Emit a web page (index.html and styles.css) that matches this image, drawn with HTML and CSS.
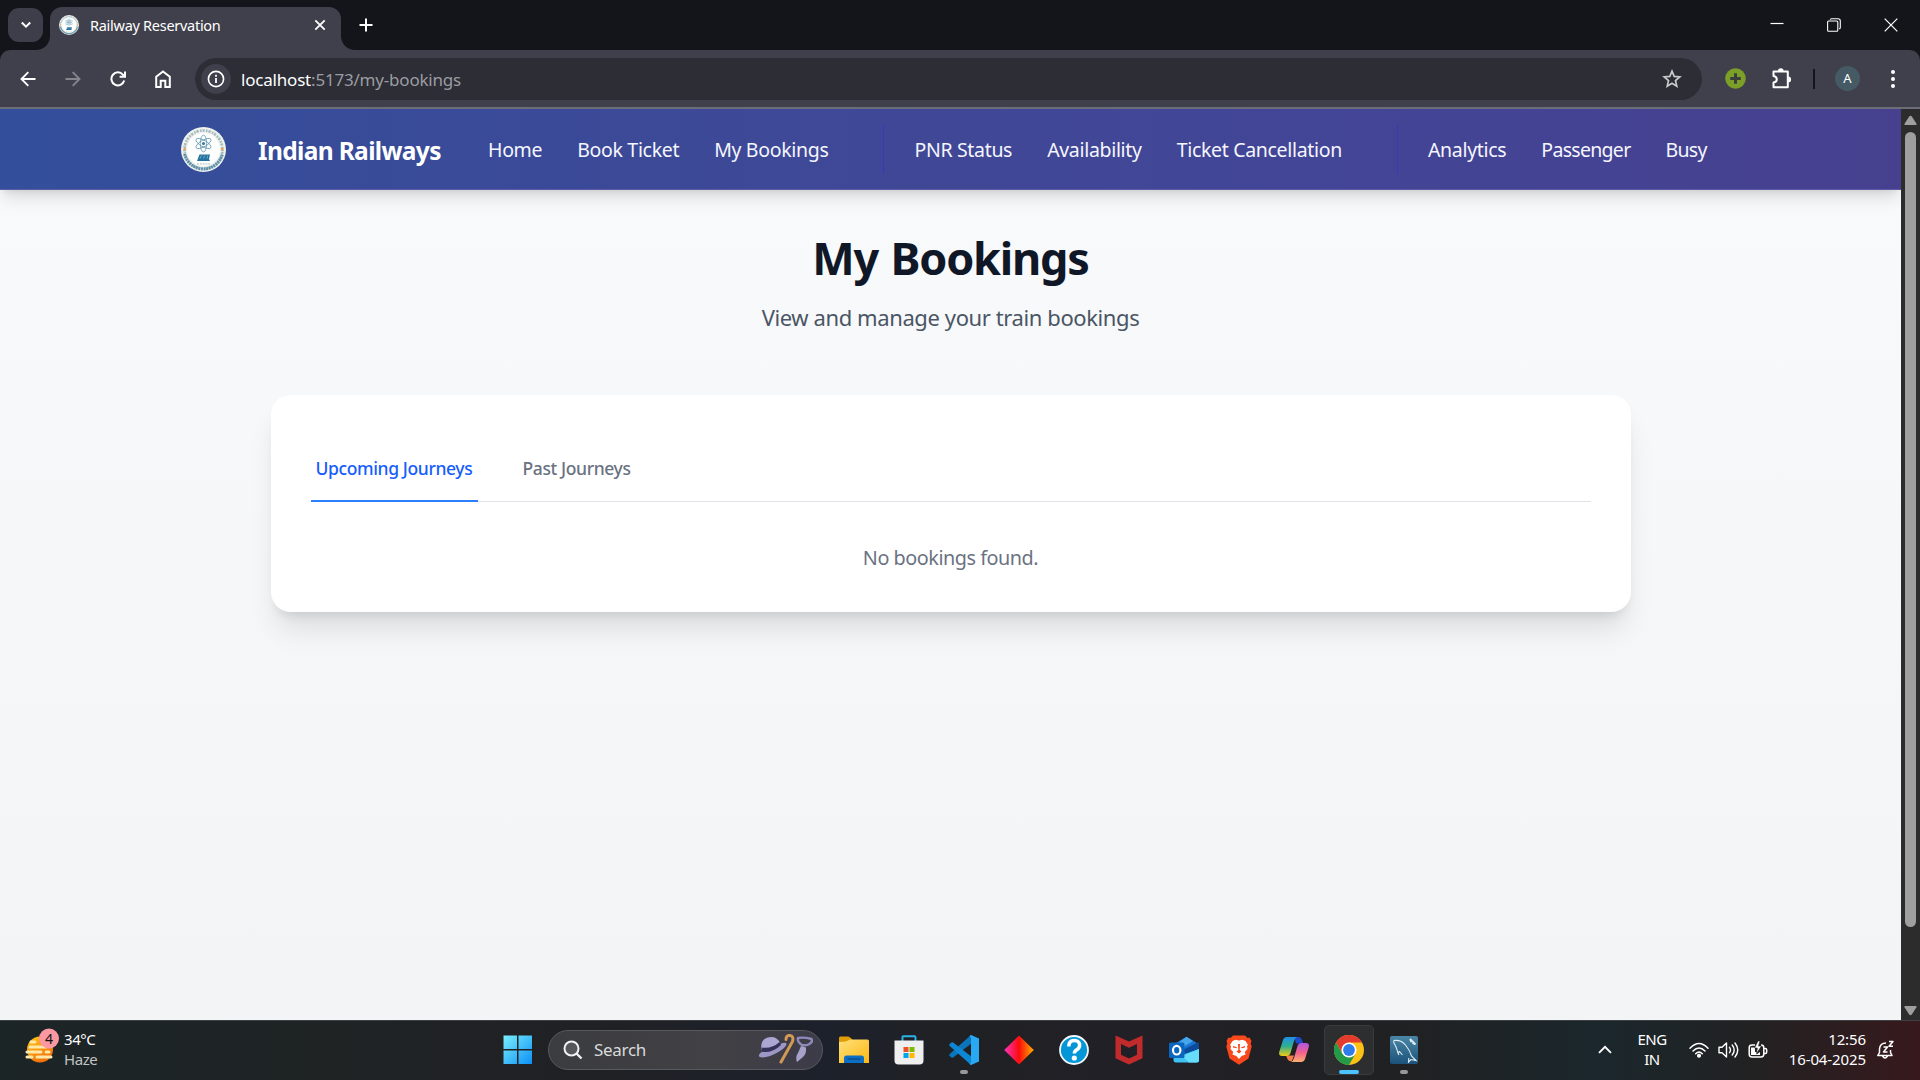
FILE: index.html
```html
<!DOCTYPE html>
<html lang="en">
<head>
<meta charset="utf-8">
<title>Railway Reservation</title>
<link rel="stylesheet" href="styles.css">
</head>
<body>
<svg class="defs" width="0" height="0" aria-hidden="true">
  <symbol id="emblem" viewBox="0 0 45 45">
    <circle cx="22.5" cy="22.5" r="22.5" fill="#eef1ec"/>
    <circle cx="22.5" cy="22.5" r="19" fill="none" stroke="#a3bac3" stroke-width="2.6" stroke-dasharray="1.6 .9 2.3 1.3"/>
    <path d="M3.6 27a19.4 19.4 0 0 0 37.8 0" fill="none" stroke="#5d90a9" stroke-width="3" stroke-dasharray="1.9 .7"/>
    <circle cx="22.5" cy="22.5" r="16.4" fill="#fff"/>
    <circle cx="3.8" cy="22" r="1.3" fill="#f0a04c"/><circle cx="41.2" cy="22" r="1.3" fill="#f0a04c"/>
    <g fill="none" stroke="#5f98b2" stroke-width=".8">
      <ellipse cx="22.5" cy="16.5" rx="3.2" ry="8.5"/>
      <ellipse cx="22.5" cy="16.5" rx="3.2" ry="8.5" transform="rotate(60 22.5 16.5)"/>
      <ellipse cx="22.5" cy="16.5" rx="3.2" ry="8.5" transform="rotate(-60 22.5 16.5)"/>
    </g>
    <circle cx="22.5" cy="16.5" r="1.6" fill="#3f7d9c"/>
    <path d="M18.500 27.5h10.500l-1 4.500 1 2H16z" fill="#23749f"/>
    <path d="M19 31.500l1.500-3M22.500 31.500l1.200-3M26 31.500l.8-3" stroke="#8cc0d8" stroke-width=".7"/>
    <path d="M16 36.8h13" stroke="#bccbd1" stroke-width="1.200" stroke-dasharray="2 .8"/>
  </symbol>
</svg>

<div class="titlebar">
  <button class="tab-search" aria-label="Search tabs">
    <svg width="12" height="8" viewBox="0 0 12 8"><path d="M1.8 1.5 6 5.7l4.2-4.2" fill="none" stroke="#fff" stroke-width="2"/></svg>
  </button>
  <div class="browser-tab">
    <svg class="favicon" width="20" height="20"><use href="#emblem"/></svg>
    <span class="browser-tab-title">Railway Reservation</span>
    <svg width="12" height="12" viewBox="0 0 12 12"><path d="m1.3 1.3 9.4 9.4m0-9.4-9.4 9.4" stroke="#fff" stroke-width="1.8"/></svg>
  </div>
  <svg class="new-tab" width="14" height="14" viewBox="0 0 14 14"><path d="M7 .5v13M.5 7h13" stroke="#fff" stroke-width="2"/></svg>
  <div class="window-controls">
    <svg width="14" height="14" viewBox="0 0 14 14"><path d="M.5 5.500h13" stroke="#fff" stroke-width="1.2"/></svg>
    <svg width="14" height="14" viewBox="0 0 14 14" fill="none" stroke="#fff" stroke-width="1.1"><rect x=".6" y="3" width="10.2" height="10.2" rx="1"/><path d="M3.2 1.8Q3.2.7 4.6.7h6.4q2.3 0 2.3 2.3v6.4q0 1.3-1.2 1.3"/></svg>
    <svg width="14" height="14" viewBox="0 0 14 14"><path d="m.7.7 12.6 12.6m0-12.6L.7 13.3" stroke="#fff" stroke-width="1.2"/></svg>
  </div>
</div>

<div class="toolbar-back">
<div class="toolbar">
  <div class="nav-buttons">
    <svg width="16" height="16" viewBox="0 0 16 16" fill="none" stroke="#fff" stroke-width="1.9"><path d="M15.5 8H2M8.3 1.2 1.5 8l6.8 6.8"/></svg>
    <svg width="16" height="16" viewBox="0 0 16 16" fill="none" stroke="#85868d" stroke-width="1.9"><path d="M.5 8H14M7.7 1.2 14.5 8l-6.8 6.8"/></svg>
    <svg width="16" height="16" viewBox="0 0 16 16" fill="none" stroke="#fff" stroke-width="2"><path d="M14.2 9.6A6.5 6.5 0 1 1 13 3.8l1.8 1.8"/><path d="M15 .4v5.4H9.6"/></svg>
    <svg width="16" height="18" viewBox="0 0 16 18" fill="none" stroke="#fff" stroke-width="2"><path d="M1.2 6.7 8 1.4l6.8 5.3V17h-4.5v-6.3H5.7V17H1.2z"/></svg>
  </div>
  <div class="omnibox">
    <span class="site-info"><svg width="18" height="18" viewBox="0 0 18 18"><circle cx="9" cy="9" r="7.6" fill="none" stroke="#fff" stroke-width="1.6"/><path d="M9 8v5M9 4.8v2" stroke="#fff" stroke-width="1.8"/></svg></span>
    <span class="url"><b>localhost</b>:5173/my-bookings</span>
    <svg class="star" width="20" height="20" viewBox="0 0 20 20"><path d="m10 2.2 2.2 5.2 5.6.5-4.3 3.7 1.3 5.6-4.8-3-4.8 3 1.3-5.6L2.2 7.900l5.600-.5z" fill="none" stroke="#c8c9cc" stroke-width="1.7"/></svg>
  </div>
  <svg class="ext-add" width="21" height="21" viewBox="0 0 21 21"><circle cx="10.5" cy="10.5" r="10.300" fill="#7c9f27"/><path d="M10.500 5.200v10.600M5.200 10.500h10.600" stroke="#3a3f3c" stroke-width="3"/></svg>
  <svg class="ext-puzzle" width="22" height="22" viewBox="0 0 22 22"><path d="M2.500 3.500h14.300v15.700H2.500v-4.700q3.300-.4 3.300-3.200T2.500 8z" fill="none" stroke="#fff" stroke-width="2" stroke-linejoin="round"/><path d="M7 3a2.800 2.800 0 0 1 5.600 0zM17.200 8.500a2.900 2.900 0 0 1 0 5.800z" fill="#fff"/></svg>
  <span class="toolbar-rule"></span>
  <span class="avatar">A</span>
  <svg class="kebab" width="6" height="20" viewBox="0 0 6 20" fill="#fff"><circle cx="3" cy="3" r="2"/><circle cx="3" cy="10" r="2"/><circle cx="3" cy="17" r="2"/></svg>
</div>
</div>

<div class="viewport">
  <div class="page">
    <header class="site-header">
      <svg class="logo" width="45" height="45"><use href="#emblem"/></svg>
      <span class="brand">Indian Railways</span>
      <nav class="site-nav">
        <div class="nav-group">
          <a>Home</a><a>Book Ticket</a><a>My Bookings</a>
        </div>
        <div class="nav-group divided">
          <a>PNR Status</a><a>Availability</a><a>Ticket Cancellation</a>
        </div>
        <div class="nav-group divided">
          <a>Analytics</a><a class="tight">Passenger</a><a class="tight">Busy</a>
        </div>
      </nav>
    </header>
    <main class="content">
      <h1>My Bookings</h1>
      <p class="subtitle">View and manage your train bookings</p>
      <section class="card">
        <div class="tabs">
          <a class="tab active">Upcoming Journeys</a>
          <a class="tab">Past Journeys</a>
        </div>
        <p class="empty">No bookings found.</p>
      </section>
    </main>
  </div>
  <div class="scrollbar">
    <svg width="13" height="11" viewBox="0 0 13 11"><path d="M5.200 1.500q1.300-1.600 2.600 0l4.700 7.300q.4 1.200-.8 1.200H1.300Q.1 10 .5 8.800z" fill="#9f9f9f"/></svg>
    <div class="thumb"></div>
    <svg width="13" height="11" viewBox="0 0 13 11"><path d="M5.200 9.500q1.300 1.600 2.600 0l4.700-7.300Q12.900 1 11.700 1H1.300Q.1 1 .5 2.200z" fill="#9f9f9f"/></svg>
  </div>
</div>

<footer class="taskbar">
  <div class="weather">
    <svg width="36" height="36" viewBox="0 0 36 36">
      <defs><linearGradient id="sun" x1="0" y1="0" x2=".5" y2="1"><stop offset="0" stop-color="#ffc814"/><stop offset="1" stop-color="#f3700c"/></linearGradient></defs>
      <circle cx="16" cy="21.500" r="13" fill="url(#sun)"/>
      <g stroke="#ffe9a8" stroke-width="3" stroke-linecap="round"><path d="M7 14h4M6 19h16M3 24h14M22 24h3M3 29h5M13 29h14"/></g>
      <circle cx="25" cy="10.500" r="10" fill="#fb98a2"/>
      <text x="25" y="15.500" text-anchor="middle" class="badge-text">4</text>
    </svg>
    <div class="weather-text"><span>34°C</span><span class="dim">Haze</span></div>
  </div>

  <div class="apps">
    <svg class="start" width="30" height="30" viewBox="0 0 30 30">
      <defs><linearGradient id="win" x1="0" y1="0" x2="1" y2="1"><stop offset="0" stop-color="#7af0fc"/><stop offset="1" stop-color="#0c8ff6"/></linearGradient></defs>
      <path d="M.500.500H14V14H.500zM15.500.500H29V14H15.500zM.500 15.500H14V29H.500zM15.500 15.500H29V29H15.500z" fill="url(#win)"/>
    </svg>
    <div class="search">
      <svg width="20" height="20" viewBox="0 0 20 20"><circle cx="8.500" cy="8.500" r="7" fill="#55565a" stroke="#f1f1f1" stroke-width="2"/><path d="m13.500 13.500 5 5" stroke="#f1f1f1" stroke-width="2.400"/></svg>
      <span>Search</span>
      <svg class="search-art" width="56" height="32" viewBox="0 0 56 32">
        <path d="M1 22.500q-1-3.500 6-6L22 10q7-2.500 6.500.500-1 3.500-9 8-13 7-18.500 4z" fill="#9d97c6"/>
        <path d="M3.500 15Q2 6 9.500 3.500 18 1 22 8.500 16 16 4.500 17z" fill="#aca6d2"/>
        <path d="M3.500 13.500Q14 15 21.500 8l1.500 3Q15 19 4.500 18z" fill="#35325a"/>
        <path d="M23 28 34.500 7.500Q36 2 32 1.500t-4 4" fill="none" stroke="#d29a55" stroke-width="3" stroke-linecap="round"/>
        <path d="M40 4q6-1 13.500 1 1.500 3.500-3 5.500-3 1.300-6.500.5-5-3-4-7z" fill="none" stroke="#8e89b8" stroke-width="2.400"/>
        <path d="m43 12 5 1.500q.5 7-3 9.500l-6 5q-2-5 1-9z" fill="#a7a1cc"/>
      </svg>
    </div>

    <div class="app">
      <svg width="30" height="28" viewBox="0 0 30 28"><defs><linearGradient id="fold" x1="0" y1="0" x2="1" y2="1"><stop offset="0" stop-color="#ffe07a"/><stop offset="1" stop-color="#fdb813"/></linearGradient></defs>
        <path d="M0 2q0-1.500 1.500-1.500H9q1 0 2 1l2 1.500v4H0z" fill="#e09c05"/><path d="M0 6q8 0 11-2.500h17.500Q30 3.500 30 5v22H0z" fill="url(#fold)"/><path d="M5 27v-5q0-2.500 2.500-2.500h15Q25 19.500 25 22v5z" fill="#0c6fc4"/><path d="M8.500 23h13" stroke="#0a4886" stroke-width="1.300"/></svg>
    </div>
    <div class="app">
      <svg width="30" height="30" viewBox="0 0 30 30"><path d="M8.500 7V2.200q0-.9.9-.9h11.200q.9 0 .9.900V7" fill="none" stroke="#2cb3e8" stroke-width="1.900"/><path d="M.500 5.500h29v20q0 4-4 4h-21q-4 0-4-4z" fill="#efefef"/><path fill="#f04f23" d="M9.500 12h5v5h-5z"/><path fill="#7fb900" d="M15.500 12h5v5h-5z"/><path fill="#02a4ee" d="M9.500 18h5v5h-5z"/><path fill="#ffb900" d="M15.500 18h5v5h-5z"/></svg>
    </div>
    <div class="app running">
      <svg width="30" height="30" viewBox="0 0 30 30"><path d="M22 8.800 4.200 22.500Q3.300 23.200 2.400 22.500L.700 20.900q-1-1 0-2L22 0z" fill="#0a74bd"/><path d="M22 21.200 4.200 7.500Q3.300 6.800 2.400 7.500L.700 9.100q-1 1 0 2L22 30z" fill="#0d86d3"/><path d="M22 0 30 3.500v23L22 30q-1.300-.2-1.500-1.500 1.500 0 1.500-1.500V3q0-1.500-1.500-1.500Q20.800.200 22 0z" fill="#29a9f2"/></svg>
    </div>
    <div class="app">
      <svg width="30" height="30" viewBox="0 0 30 30"><defs><linearGradient id="dia"><stop offset="0" stop-color="#fb35c0"/><stop offset=".5" stop-color="#fb0b0b"/><stop offset="1" stop-color="#fdb000"/></linearGradient></defs><path d="M15 .500 29.800 15 15 29.500.200 15z" fill="url(#dia)"/></svg>
    </div>
    <div class="app">
      <svg width="30" height="30" viewBox="0 0 30 30"><circle cx="15" cy="15" r="14" fill="#0596d8" stroke="#f3f8fb" stroke-width="1.800"/><path d="M9.800 11.500q0-6 5.400-6t5.400 4.800q0 3-3 4.600-2.200 1.200-2.200 3.600" fill="none" stroke="#fff" stroke-width="3.500"/><circle cx="15.300" cy="23" r="2.600" fill="#fff"/></svg>
    </div>
    <div class="app">
      <svg width="28" height="30" viewBox="0 0 28 30"><path d="M.500.500 14 6.500 27.500.500v22.700L14 29.500.500 23.200z M6 9v10.800l8 3.800 8-3.800V9l-8 3.700z" fill="#c12b2b" fill-rule="evenodd"/></svg>
    </div>
    <div class="app">
      <svg width="30" height="28" viewBox="0 0 30 28"><path d="M5 8 17.500.800 29.500 8v8L12 22z" fill="#1b74d0"/><path d="M9 7 17.500.800 24 5 11 13z" fill="#46a6ec"/><path d="m14 14 15.500-8v8L17 20z" fill="#0b4a9c"/><path d="M30 13v11q0 2.500-2.500 2.500H7q-2.500 0-2.500-2.500v-2z" fill="#3fc2f3"/><path d="M30 13v11q0 2.500-2.500 2.500H20L13 20z" fill="#67dcfb"/><rect y="6.500" width="15.500" height="15.500" rx="1.500" fill="#0b66c0"/><ellipse cx="7.700" cy="14.200" rx="3.700" ry="4.300" fill="none" stroke="#fff" stroke-width="2.200"/></svg>
    </div>
    <div class="app">
      <svg width="26" height="30" viewBox="0 0 26 30"><path d="M7 .500h12L21.500 3l2-.4L25.500 6l-.8 2.500 1 3-3.200 12L13 29.800 3.500 23.500.300 11.500l1-3L.500 6l2-3.400 2 .4z" fill="#f8481c"/><path d="m13 5.500 3.500-.7 3 1.200 2.500 4-1 1 .500 3-2.700 3 .8 2.500-4 1.500L13 24l-2.600-3-4-1.500.8-2.500-2.700-3 .5-3-1-1 2.500-4 3-1.200z" fill="#fff"/><path d="m7 11 4 1.200-.8 1L7 12.500zM19 11l-4 1.200.8 1 3.200-.700zM12 9h2l-.3 6 1.800 1.600L13 18.500l-2.500-1.900 1.800-1.600z" fill="#f8481c"/></svg>
    </div>
    <div class="app">
      <svg width="30" height="27" viewBox="0 0 30 27"><defs><linearGradient id="cpa" x1="0" y1="0" x2="0" y2="1"><stop offset="0" stop-color="#1f8fe8"/><stop offset=".5" stop-color="#31b08b"/><stop offset="1" stop-color="#f2cc12"/></linearGradient><linearGradient id="cpb" x1="0" y1="0" x2="0" y2="1"><stop offset="0" stop-color="#ad58e6"/><stop offset=".5" stop-color="#f2608d"/><stop offset="1" stop-color="#fdae72"/></linearGradient></defs>
        <path d="M15 1h4q3 0 4 3l1 3.500h-7z" fill="#1e49c9"/><path d="M7 19.500h8l-2 5.500q-3 1-4.500-2z" fill="#f47c48"/><path d="M8 1h10q-2 .500-3 4l-3.500 12q-1 3-4 3H3q-4 0-2.500-5L4 4q1-3 4-3z" fill="url(#cpa)"/><path d="M22 26H12q2-.500 3-4l3.500-12q1-3 4-3H27q4 0 2.500 5L26 23q-1 3-4 3z" fill="url(#cpb)"/></svg>
    </div>
    <div class="app current">
      <svg width="30" height="30" viewBox="0 0 30 30"><circle cx="15" cy="15" r="15" fill="#fbc116"/><path d="M15 7.500h13a15 15 0 0 0-26 0l6.500 11.200z" fill="#e33b2e"/><path d="M2 7.500A15 15 0 0 0 15 30l6.500-11.300L15 22 8.500 18.700z" fill="#229a48"/><circle cx="15" cy="15" r="7.600" fill="#fff"/><circle cx="15" cy="15" r="5.900" fill="#2f7cec"/></svg>
    </div>
    <div class="app running">
      <svg width="28" height="28" viewBox="0 0 28 28"><defs><linearGradient id="sql" x1="0" y1="0" x2="0" y2="1"><stop offset="0" stop-color="#4a86a6"/><stop offset="1" stop-color="#1c537a"/></linearGradient></defs><rect width="28" height="28" rx="2" fill="url(#sql)"/><path d="M8 17Q6 10 4.500 8T4 4.500Q11 3.500 15.500 9t6 11l4.500 4.500-5-1-2.500 2.500.3-4M8 17l1.500-1.500L12.500 19M8 17l1 2" fill="none" stroke="#e2edf3" stroke-width="1.100"/><path d="m20 3 5.500 5.500M20 3l1.500 3M25.500 8.500 22.500 7" stroke="#e2edf3" stroke-width="1.800"/></svg>
    </div>
  </div>

  <div class="tray">
    <svg width="14" height="9" viewBox="0 0 14 9"><path d="m1 7.800 6-6 6 6" fill="none" stroke="#fff" stroke-width="1.900"/></svg>
    <div class="lang"><span>ENG</span><span>IN</span></div>
    <div class="status">
      <svg width="20" height="16" viewBox="0 0 20 16" fill="none" stroke="#fff" stroke-width="1.500" stroke-linecap="round"><path d="M1 6.200q9-9.500 18 0M4 9q6-6 12 0M6.700 11.700q3.300-3.200 6.600 0"/><circle cx="10" cy="13.800" r="1.300" fill="#fff"/></svg>
      <svg width="21" height="18" viewBox="0 0 21 18" fill="none" stroke="#fff" stroke-width="1.400" stroke-linecap="round" stroke-linejoin="round"><path d="M1 6.200h3L8.500 2v14L4 11.800H1z"/><path d="M11.500 6.300q2 2.700 0 5.400M14.200 4q4 5 0 10M17 2q5.500 7 0 14"/></svg>
      <svg width="20" height="18" viewBox="0 0 20 18"><path d="M7 4H4Q1.200 4 1.200 6.700v6.600Q1.200 16 4 16h9q2.800 0 2.800-2.700V6.700Q15.800 4 13 4M16.500 7.500h.7q1.500 0 1.500 1.500v2q0 1.500-1.500 1.500h-.7" fill="none" stroke="#fff" stroke-width="1.500"/><path d="M3 6.500h4V11h2l-.5 2.500L12 11v3H3z" fill="#fff"/><path d="M10 0 6.500 7h2.800l-.8 5.500L13.500 5h-3L12 0z" fill="#fff" stroke="#202122" stroke-width=".6"/></svg>
    </div>
    <div class="clock"><span>12:56</span><span>16-04-2025</span></div>
    <svg class="bell" width="19" height="20" viewBox="0 0 19 20" fill="none" stroke="#fff" stroke-width="1.500" stroke-linejoin="round"><path d="M10 3Q4 3 3.500 9v3.500L1.800 15.500H16l-1.500-3V10M6.500 16q2.500 3.800 5 0"/><path d="M7.500 7h4l-4 5h4M13 1.500h4l-4 4.700h4"/></svg>
  </div>
</footer>
</body>
</html>
```
FILE: styles.css
```css
* { box-sizing: border-box; }

body {
  margin: 0;
  width: 1920px;
  height: 1080px;
  display: flex;
  flex-direction: column;
  overflow: hidden;
  background: #14151a;
  font-family: "Noto Sans", "Open Sans", sans-serif;
}

h1, p { margin: 0; }
svg { display: block; flex: none; }
.defs { position: absolute; }

/* Browser tab strip */
.titlebar {
  height: 50px;
  flex: none;
  display: flex;
  align-items: center;
  padding: 0 25px 0 8px;
  background: #14151a;
}
.tab-search {
  position: relative;
  z-index: 1;
  width: 35px;
  height: 34px;
  padding: 0;
  border: 0;
  border-radius: 11px;
  background: #3d3e4a;
  display: grid;
  place-items: center;
}
.browser-tab {
  position: relative;
  width: 291px;
  height: 43px;
  margin: 7px 0 0 7px;
  padding: 0 15px 7px 9px;
  display: flex;
  align-items: center;
  border-radius: 12px 12px 0 0;
  background: #3f404c;
}
.browser-tab::before,
.browser-tab::after {
  content: "";
  position: absolute;
  bottom: 0;
  width: 14px;
  height: 14px;
}
.browser-tab::before {
  left: -14px;
  background: radial-gradient(circle at 0 0, #14151a 13.5px, #3f404c 14.5px);
}
.browser-tab::after {
  right: -14px;
  background: radial-gradient(circle at 100% 0, #14151a 13.5px, #3f404c 14.5px);
}
.browser-tab-title {
  flex: 1;
  padding-left: 11px;
  color: #fff;
  font-size: 14.5px;
  letter-spacing: -0.28px;
  line-height: 20px;
}
.new-tab { margin-left: 18px; }
.window-controls {
  margin-left: auto;
  margin-right: -3px;
  display: flex;
  gap: 43px;
}

/* Browser toolbar */
.toolbar-back {
  flex: none;
  background: #14151a;
}
.toolbar {
  height: 59px;
  display: flex;
  align-items: center;
  padding: 0 24px 0 20px;
  border-bottom: 2px solid #6b6e76;
  border-radius: 10px 10px 0 0;
  background: #3f404c;
}
.nav-buttons {
  display: flex;
  align-items: center;
  gap: 29px;
  width: 175px;
}
.omnibox {
  width: 1507px;
  height: 42px;
  display: flex;
  align-items: center;
  padding: 0 20px 0 6px;
  border-radius: 21px;
  background: #2c2d35;
  margin-top: 1px;
}
.site-info {
  width: 30px;
  height: 30px;
  border-radius: 50%;
  display: grid;
  place-items: center;
  background: #3f404c;
}
.url {
  flex: 1;
  padding-left: 10px;
  color: #9b9ca2;
  font-size: 17px;
  letter-spacing: -0.2px;
}
.url b { font-weight: 400; color: #fff; }
.ext-add { margin-left: 23px; }
.ext-puzzle { margin-left: 25px; }
.toolbar-rule {
  width: 2px;
  height: 20px;
  margin-left: 20px;
  background: #14151a;
}
.avatar {
  width: 25px;
  height: 25px;
  margin-left: 20px;
  border-radius: 50%;
  background: #455a64;
  color: #fff;
  font-size: 13px;
  line-height: 25px;
  text-align: center;
}
.kebab { margin-left: auto; }

/* Web page area */
.viewport {
  height: 911px;
  flex: none;
  display: flex;
}
.page {
  width: 1901px;
  overflow: hidden;
  background: linear-gradient(#f9fafb, #f3f4f6);
}
.site-header {
  height: 81px;
  display: flex;
  align-items: center;
  padding-left: 181px;
  border-bottom: 1px solid #5c5aa6;
  background: linear-gradient(90deg, #334f9b, #384b99 20%, #3f4896 46%, #434596 70%, #46408f);
  box-shadow: 0 11px 16px -3px rgba(0, 0, 0, .12), 0 4px 7px -4px rgba(0, 0, 0, .12);
  color: #fff;
}
.brand {
  width: 231px;
  padding: 3px 0 0 32px;
  font-size: 24.5px;
  font-weight: 700;
  letter-spacing: -0.65px;
  white-space: nowrap;
}
.site-nav {
  display: flex;
  align-items: center;
}
.nav-group {
  height: 50px;
  display: flex;
  align-items: center;
  gap: 35px;
  padding: 1px 0 0 31px;
  font-size: 19.5px;
  letter-spacing: -0.32px;
  white-space: nowrap;
  color: #f5f6fe;
}
.nav-group.divided {
  margin-left: 55px;
  border-left: 1px solid #4034b8;
  padding-left: 30px;
}
.nav-group .tight { letter-spacing: -0.7px; }

.content {
  display: flex;
  flex-direction: column;
  align-items: center;
  padding-top: 40px;
}
h1 {
  color: #101828;
  font-size: 45px;
  line-height: 55px;
  letter-spacing: -1.2px;
  word-spacing: 2px;
}
.subtitle {
  margin-top: 17px;
  color: #4a5565;
  font-size: 22px;
  line-height: 30px;
  letter-spacing: -0.4px;
}
.card {
  width: 1360px;
  height: 217px;
  margin-top: 63px;
  padding: 40px;
  border-radius: 20px;
  background: #fff;
  box-shadow: 0 22px 28px -5px rgba(0, 0, 0, .1), 0 9px 11px -6px rgba(0, 0, 0, .1);
}
.tabs {
  height: 67px;
  display: flex;
  gap: 36px;
  border-bottom: 1px solid #e0e2e7;
}
.tab {
  height: 67px;
  padding: 2px 4px 0;
  border-bottom: 2px solid transparent;
  color: #6a7282;
  font-size: 17.5px;
  font-weight: 500;
  letter-spacing: -0.38px;
  line-height: 63px;
}
.tab + .tab { padding-left: 9px; }
.tab.active {
  width: 167px;
  padding-left: 5px;
  color: #155dfc;
  border-color: #2b7fff;
}
.empty {
  margin-top: 42px;
  color: #6a7282;
  font-size: 19.8px;
  line-height: 28px;
  letter-spacing: -0.46px;
  text-align: center;
}

.scrollbar {
  width: 19px;
  display: flex;
  flex-direction: column;
  align-items: center;
  padding: 6px 0 4px;
  background: #2c2c2c;
}
.thumb {
  width: 11px;
  height: 795px;
  margin: 6px 0 auto;
  border-radius: 6px;
  background: #9f9f9f;
}

/* Desktop taskbar */
.taskbar {
  height: 60px;
  display: flex;
  align-items: center;
  padding-bottom: 2px;
  border-top: 1px solid #3e4143;
  background: linear-gradient(90deg, #1c2526 0, #1f2324 350px, #202124 560px, #1d212b 830px, #202124 960px, #212027 1120px, #202122 1400px, #1b272c 1600px, #212223 1740px, #2a1e20 1820px, #38191d 1920px);
  color: #fff;
  font-size: 15px;
}
.weather {
  width: 503px;
  display: flex;
  align-items: center;
  padding-left: 24px;
}
.weather svg { margin-top: -8px; }
.badge-text { font-size: 14px; fill: #111; }
.weather-text {
  display: flex;
  flex-direction: column;
  padding-left: 4px;
  line-height: 20px;
  letter-spacing: -0.45px;
  margin-top: -1px;
}
.dim { color: #c2c4c4; }
.apps {
  display: flex;
  align-items: center;
  gap: 5px;
}
.start { margin-right: 10px; }
.search {
  width: 275px;
  height: 40px;
  margin-right: 1px;
  padding: 0 8px 0 14px;
  display: flex;
  align-items: center;
  border: 1px solid #58595c;
  border-radius: 20px;
  background: linear-gradient(90deg, #3b3c3f, #424145 60%, #3c3b48);
  color: #d9dadb;
  font-size: 17px;
  letter-spacing: -0.3px;
}
.search span { padding-left: 11px; }
.search-art { margin-left: auto; }
.app {
  position: relative;
  width: 50px;
  height: 50px;
  display: grid;
  place-items: center;
}
.app.current {
  border: 1px solid #3a3b3c;
  border-radius: 5px;
  background: #2d2e2f;
}
.app.running::after,
.app.current::after {
  content: "";
  position: absolute;
  bottom: 1px;
  left: 21px;
  width: 8px;
  height: 4px;
  border-radius: 2px;
  background: #969899;
}
.app.current::after {
  bottom: 0;
  left: 14px;
  width: 20px;
  background: #4cc2ff;
}
.tray {
  flex: 1;
  display: flex;
  align-items: center;
  justify-content: flex-end;
  padding-right: 25px;
  line-height: 20px;
}
.lang {
  width: 40px;
  margin-left: 20px;
  display: flex;
  flex-direction: column;
  align-items: center;
  letter-spacing: -0.5px;
}
.status {
  display: flex;
  align-items: center;
  gap: 9px;
  margin-left: 17px;
}
.clock {
  width: 98px;
  display: flex;
  flex-direction: column;
  align-items: flex-end;
  letter-spacing: -0.1px;
}
.lang, .clock { margin-top: -1px; }
.bell { margin-left: 10px; }
```
